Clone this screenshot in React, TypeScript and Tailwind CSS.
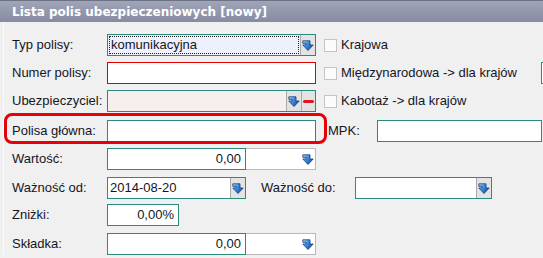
import React from 'react'

const TEAL = 'border-[#2a8a80]'

function DropIcon() {
  return (
    <svg width="12" height="11" viewBox="0 0 12 11" className="shrink-0">
      <defs>
        <linearGradient id="dropg" x1="0" y1="0" x2="1" y2="0.6">
          <stop offset="0" stopColor="#b8e0ff" />
          <stop offset="0.5" stopColor="#3a8ae0" />
          <stop offset="1" stopColor="#1650a6" />
        </linearGradient>
      </defs>
      <path
        d="M0.8 0.8 H8 V5 H11.2 L6 10.5 L0.8 5 H4 V3.3 H0.8 Z"
        fill="url(#dropg)"
        stroke="#143a74"
        strokeWidth="0.8"
        strokeLinejoin="round"
      />
    </svg>
  )
}

function DropButton({ plain }: { plain?: boolean }) {
  return (
    <div
      className={
        plain
          ? 'w-[15px] h-full flex items-center justify-center'
          : 'w-[15px] h-full flex items-center justify-center bg-[#e3e3e3] border-l border-[#a9a9a9]'
      }
    >
      <DropIcon />
    </div>
  )
}

function Check({ label }: { label: string }) {
  return (
    <div className="flex items-center ml-[8px]">
      <div className="w-[13px] h-[13px] border border-[#c4c4c4] bg-[#fbfbfb]" />
      <span className="ml-[4px] whitespace-nowrap">{label}</span>
    </div>
  )
}

function Label({ text }: { text: string }) {
  return <span className="w-[95px] shrink-0 whitespace-nowrap">{text}</span>
}

function Amount({ value }: { value: string }) {
  return (
    <div className="flex h-[22px]">
      <div className={`w-[139px] h-full border ${TEAL} bg-white flex items-center justify-end pr-[4px]`}>{value}</div>
      <div className="w-[70px] h-full border border-l-0 border-[#b9b9b9] bg-white flex justify-end">
        <DropButton plain />
      </div>
    </div>
  )
}

export default function App() {
  return (
    <div className="w-[543px] h-[258px] overflow-hidden relative bg-[#f0f0f0] font-['Liberation_Sans',Arial,sans-serif] text-[13px] text-[#15151f]">
      {/* TITLE */}
      <div className="h-[22px] border-t border-[#6d7284] bg-gradient-to-b from-[#a0a5b8] to-[#858ba1] flex items-center pl-[12px] text-white font-bold font-['DejaVu_Sans',Verdana,sans-serif] text-[12px]">
        Lista polis ubezpieczeniowych [nowy]
      </div>

      <div className="flex flex-col ml-[3px] pl-[8px] border-l border-[#fbfbfb]">
        {/* Typ polisy */}
        <div className="flex items-center h-[22px] mt-[12px]">
          <Label text="Typ polisy:" />
          <div className={`w-[209px] h-full border ${TEAL} bg-[#eef0fb] flex`}>
            <div className="flex-1 m-[1px] border border-dotted border-[#222] flex items-center pl-[1px]">
              komunikacyjna
            </div>
            <DropButton />
          </div>
          <Check label="Krajowa" />
        </div>

        {/* Numer polisy */}
        <div className="flex items-center h-[22px] mt-[6px]">
          <Label text="Numer polisy:" />
          <div className="w-[209px] h-full border border-[#e10000] bg-white" />
          <Check label="Międzynarodowa -> dla krajów" />
          <div className={`ml-auto -mr-[8px] w-[10px] h-full border ${TEAL} bg-white`} />
        </div>

        {/* Ubezpieczyciel */}
        <div className="flex items-center h-[22px] mt-[6px]">
          <Label text="Ubezpieczyciel:" />
          <div className={`w-[209px] h-full border ${TEAL} bg-[#f7eeee] flex justify-end`}>
            <DropButton />
            <div className="w-[14px] h-full flex items-center justify-center bg-[#e3e3e3] border-l border-[#a9a9a9]">
              <div className="w-[11px] h-[3px] rounded-full bg-[#e0141c]" />
            </div>
          </div>
          <Check label="Kabotaż -> dla krajów" />
        </div>

        {/* Polisa główna */}
        <div className="flex items-center h-[22px] mt-[8px]">
          <Label text="Polisa główna:" />
          <div className={`w-[209px] h-full border ${TEAL} bg-white`} />
          <span className="ml-[12px] w-[49px]">MPK:</span>
          <div className={`w-[165px] h-full border ${TEAL} bg-white`} />
        </div>

        {/* Wartość */}
        <div className="flex items-center h-[22px] mt-[6px]">
          <Label text="Wartość:" />
          <Amount value="0,00" />
        </div>

        {/* Ważność */}
        <div className="flex items-center h-[22px] mt-[7px]">
          <Label text="Ważność od:" />
          <div className={`w-[139px] h-full border ${TEAL} bg-white flex`}>
            <div className="flex-1 flex items-center pl-[2px]">2014-08-20</div>
            <DropButton />
          </div>
          <span className="ml-[15px] w-[94px] whitespace-nowrap">Ważność do:</span>
          <div className={`w-[137px] h-full border ${TEAL} bg-white flex justify-end`}>
            <DropButton />
          </div>
        </div>

        {/* Zniżki */}
        <div className="flex items-center h-[22px] mt-[5px]">
          <Label text="Zniżki:" />
          <div className={`w-[72px] h-full border ${TEAL} bg-white flex items-center justify-end pr-[4px]`}>0,00%</div>
        </div>

        {/* Składka */}
        <div className="flex items-center h-[22px] mt-[7px]">
          <Label text="Składka:" />
          <Amount value="0,00" />
        </div>
      </div>

      {/* highlight */}
      <div className="absolute left-[4px] top-[113px] w-[323px] h-[31px] border-[3px] border-[#e5000a] rounded-[8px]" />
    </div>
  )
}
